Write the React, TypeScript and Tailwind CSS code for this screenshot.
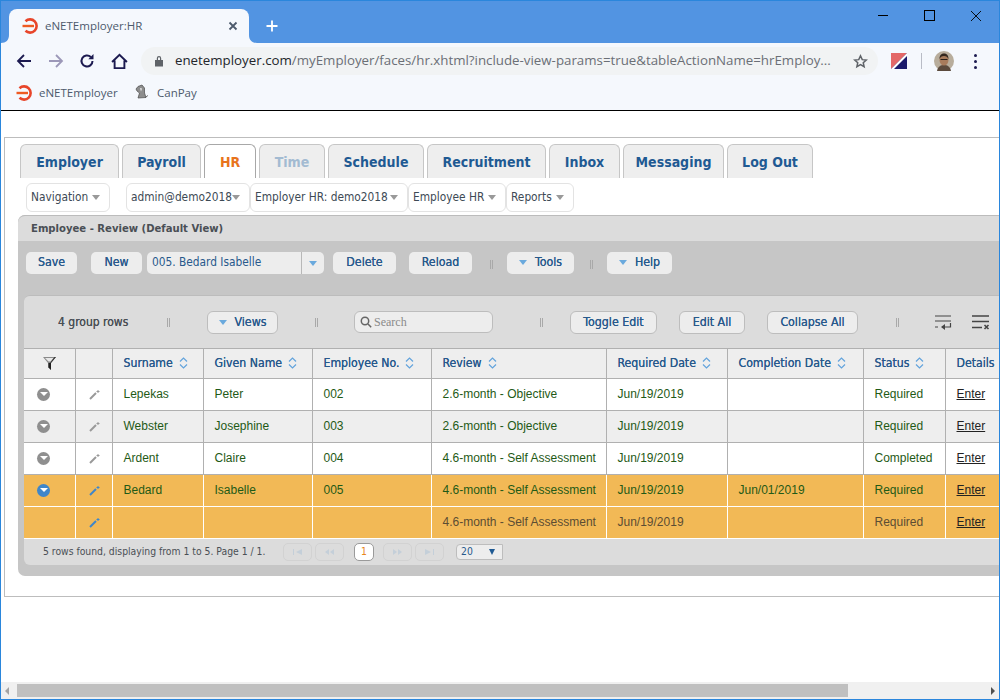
import type { ReactNode } from 'react';

const tahoma = 'font-["DejaVu_Sans_Condensed","DejaVu_Sans",sans-serif]';

const tabs = [
  { label: 'Employer', w: 'w-[99px]', text: 'text-[#1f5a93]' },
  { label: 'Payroll', w: 'w-[79px]', text: 'text-[#1f5a93]' },
  { label: 'HR', w: 'w-[52px]', text: 'text-[#e8731c]', active: true },
  { label: 'Time', w: 'w-[66px]', text: 'text-[#a3bbd2]' },
  { label: 'Schedule', w: 'w-[96px]', text: 'text-[#1f5a93]' },
  { label: 'Recruitment', w: 'w-[119px]', text: 'text-[#1f5a93]' },
  { label: 'Inbox', w: 'w-[71px]', text: 'text-[#1f5a93]' },
  { label: 'Messaging', w: 'w-[101px]', text: 'text-[#1f5a93]' },
  { label: 'Log Out', w: 'w-[86px]', text: 'text-[#1f5a93]' },
];

const columns = [
  { label: '', w: 'w-[51px]' },
  { label: '', w: 'w-[37px]' },
  { label: 'Surname', w: 'w-[91px]' },
  { label: 'Given Name', w: 'w-[109px]' },
  { label: 'Employee No.', w: 'w-[119px]' },
  { label: 'Review', w: 'w-[175px]' },
  { label: 'Required Date', w: 'w-[121px]' },
  { label: 'Completion Date', w: 'w-[136px]' },
  { label: 'Status', w: 'w-[82px]' },
  { label: 'Details', w: 'w-[70px]' },
];

const rows = [
  { surname: 'Lepekas', given: 'Peter', no: '002', review: '2.6-month - Objective', done: '', status: 'Required', bg: 'bg-white', icon: true },
  { surname: 'Webster', given: 'Josephine', no: '003', review: '2.6-month - Objective', done: '', status: 'Required', bg: 'bg-[#eeeeee]', icon: true },
  { surname: 'Ardent', given: 'Claire', no: '004', review: '4.6-month - Self Assessment', done: '', status: 'Completed', bg: 'bg-white', icon: true },
  { surname: 'Bedard', given: 'Isabelle', no: '005', review: '4.6-month - Self Assessment', done: 'Jun/01/2019', status: 'Required', bg: 'bg-[#f2b956]', icon: true, selected: true },
  { surname: '', given: '', no: '', review: '4.6-month - Self Assessment', done: '', status: 'Required', bg: 'bg-[#f2b956]', icon: false, selected: true, child: true },
];

function Logo() {
  return (
    <svg width="16" height="16" viewBox="0 0 16 16" className="shrink-0">
      <path d="M3.500 3.200A6.600 6.600 0 1 1 3.500 12.800" fill="none" stroke="#e8452a" strokeWidth="2.600" />
      <path d="M0.500 6.800H12V9.200H0.500Z" fill="#ee5a22" />
    </svg>
  );
}

function Caret({ className = 'border-t-[#999999]' }: { className?: string }) {
  return <span className={`inline-block h-0 w-0 shrink-0 border-x-[4px] border-t-[5px] border-x-transparent ${className}`} />;
}

function NavMenu({ label, w, className = '' }: { label: string; w: string; className?: string }) {
  return (
    <div className={`flex h-[29px] ${w} items-center justify-between rounded-[6px] border border-[#e3e3e3] bg-white pl-[4px] pr-[9px] pt-[1px] text-[11.8px] text-[#3d4a55] ${className}`}>
      <span className="whitespace-nowrap">{label}</span>
      <Caret />
    </div>
  );
}

function ToolButton({ label, w, menu, className = '' }: { label: string; w: string; menu?: boolean; className?: string }) {
  return (
    <button className={`flex h-[22px] ${w} items-center justify-center gap-[8px] rounded-[5px] bg-[#ededed] pb-[1px] text-[12.3px] text-[#28598c] [text-shadow:0_0_0.5px_#28598c] ${className}`}>
      {menu && <Caret className="border-t-[#6aa9dd]" />}
      {label}
    </button>
  );
}

function GridButton({ label, w, menu }: { label: string; w: string; menu?: boolean }) {
  return (
    <button className={`flex h-[23px] ${w} items-center justify-center gap-[8px] rounded-[6px] border border-[#bdbdbd] bg-[#ededed] text-[12.3px] text-[#28598c] [text-shadow:0_0_0.5px_#28598c]`}>
      {menu && <Caret className="border-t-[#6aa9dd]" />}
      {label}
    </button>
  );
}

function Separator({ className = '' }: { className?: string }) {
  return <span className={`inline-block h-[9px] w-[3px] border-x border-[#a9a9a9] ${className}`} />;
}

function SortIcon() {
  return (
    <svg width="9" height="12" viewBox="0 0 9 12" fill="none" stroke="#62a3dc" strokeWidth="1.200" className="shrink-0">
      <path d="M1 4.500 4.500 1 8 4.500M1 7.500 4.500 11 8 7.500" />
    </svg>
  );
}

function Pencil({ color }: { color: string }) {
  return (
    <svg width="11" height="11" viewBox="0 0 11 11" fill="none" stroke={color}>
      <path d="M1 10 7 4" strokeWidth="2" />
      <path d="M9 1v3M7.500 2.500h3" strokeWidth="1" />
    </svg>
  );
}

function RowToggle({ selected }: { selected?: boolean }) {
  return (
    <span className={`ml-[13px] flex h-[13px] w-[13px] items-center justify-center rounded-full ${selected ? 'bg-[#3f86c9]' : 'bg-[#8f8f8f]'}`}>
      <span className="h-0 w-0 border-x-[4px] border-t-[4px] border-x-transparent border-t-white" />
    </span>
  );
}

function PageButton({ path }: { path: string }) {
  return (
    <span className="flex h-[18px] w-[29px] items-center justify-center rounded-[5px] border border-[#d2d2d2]">
      <svg width="9" height="6" viewBox="0 0 9 6" fill="#c4cfd9">
        <path d={path} />
      </svg>
    </span>
  );
}

function HeaderCell({ label }: { label: string }) {
  return (
    <span className="flex items-center gap-[6px] whitespace-nowrap pb-[1px] text-[12.2px] text-[#28598c] [text-shadow:0_0_0.5px_#28598c]">
      {label}
      <SortIcon />
    </span>
  );
}

function BodyCell({ children, className = '' }: { children?: ReactNode; className?: string }) {
  return <td className={`border-l px-[11px] pb-[2px] whitespace-nowrap ${className}`}>{children}</td>;
}

export default function App() {
  return (
    <div className="flex h-[700px] w-[1000px] flex-col overflow-hidden border border-[#2a86dc] bg-white">
      {/* browser chrome */}
      <div className='h-[42px] shrink-0 bg-[#5294e2] font-["Open_Sans",sans-serif]'>
        <div className="flex h-full items-end pl-[8px]">
          <div className="relative flex h-[34px] w-[240px] items-center rounded-t-[8px] bg-[#f5f8fd] pl-[13px] pr-[11px]">
            <svg width="8" height="8" viewBox="0 0 8 8" fill="#f5f8fd" className="absolute bottom-0 -left-[8px]">
              <path d="M0 8C5 8 8 5 8 0V8Z" />
            </svg>
            <svg width="8" height="8" viewBox="0 0 8 8" fill="#f5f8fd" className="absolute bottom-0 -right-[8px]">
              <path d="M8 8C3 8 0 5 0 0V8Z" />
            </svg>
            <Logo />
            <span className="ml-[7px] flex-1 text-[11.5px] text-[#4d5a6c]">eNETEmployer:HR</span>
            <svg width="10" height="10" viewBox="0 0 10 10" stroke="#4d5a6c" strokeWidth="1.800">
              <path d="M1.500 1.500l7 7M8.500 1.500l-7 7" />
            </svg>
          </div>
          <svg width="14" height="14" viewBox="0 0 14 14" stroke="#ffffff" strokeWidth="1.800" className="mb-[10px] ml-[16px]">
            <path d="M7 1.500v11M1.500 7h11" />
          </svg>
          <div className="mb-[22px] ml-auto flex items-center gap-[36px] pr-[18px]">
            <span className="h-px w-[10px] bg-black" />
            <span className="h-[11px] w-[11px] border border-black" />
            <svg width="10" height="10" viewBox="0 0 10 10" stroke="#000000" strokeWidth="0.900">
              <path d="M0 0l10 10M10 0 0 10" />
            </svg>
          </div>
        </div>
      </div>
      <div className='flex h-[32px] shrink-0 items-center bg-[#f5f8fd] pt-[4px] font-["Open_Sans",sans-serif]'>
        <div className="flex w-[140px] shrink-0 items-center pl-[15px]">
          <svg width="16" height="16" viewBox="0 0 16 16" fill="none" stroke="#1c1a50" strokeWidth="1.800">
            <path d="M15 8H2M8 2 2 8l6 6" />
          </svg>
          <svg width="16" height="16" viewBox="0 0 16 16" fill="none" stroke="#9c98b8" strokeWidth="1.800" className="ml-[16px]">
            <path d="M1 8h13M8 2l6 6-6 6" />
          </svg>
          <svg width="16" height="16" viewBox="0 0 16 16" fill="none" stroke="#1c1a50" strokeWidth="2" className="ml-[15px]">
            <path d="M13.500 8A5.500 5.500 0 1 1 11.800 4" />
            <path d="M14.500 1v5.200H9.300Z" fill="#1c1a50" stroke="none" />
          </svg>
          <svg width="17" height="17" viewBox="0 0 16 16" fill="none" stroke="#1c1a50" strokeWidth="1.800" className="ml-[16px]">
            <path d="M1 8.500 8 1.800l7 6.700M3.400 7v7.200h9.200V7" />
          </svg>
        </div>
        <div className="flex h-[28px] w-[737px] shrink-0 items-center rounded-full bg-[#f1f3f4] pl-[13px] pr-[10px]">
          <svg width="10" height="12" viewBox="0 0 10 12" fill="#5f6368" className="shrink-0">
            <path d="M1 5h8v6.500H1ZM2.800 5V3.200a2.200 2.200 0 0 1 4.400 0V5H6V3.200a1 1 0 0 0-2 0V5Z" />
          </svg>
          <span className="ml-[11px] flex-1 whitespace-nowrap text-[13.3px] text-[#6b6f76]">
            <span className="text-[#23262b]">enetemployer.com</span>/myEmployer/faces/hr.xhtml?include-view-params=true&amp;tableActionName=hrEmploy...
          </span>
          <svg width="15" height="15" viewBox="0 0 24 24" fill="none" stroke="#5f6368" strokeWidth="2.400" className="shrink-0">
            <path d="m12 3 2.800 6 6.400.7-4.800 4.300 1.400 6.400L12 17.100 6.200 20.400 7.600 14 2.800 9.700 9.200 9Z" />
          </svg>
        </div>
        <svg width="16" height="16" viewBox="0 0 16 16" className="ml-[13px] shrink-0">
          <rect width="16" height="16" fill="#e36868" />
          <path d="M16 0v16H0Z" fill="#1b1a6b" />
          <path d="M16 0 0 16h3L16 3Z" fill="#ffffff" />
        </svg>
        <span className="ml-[14px] h-[16px] w-px shrink-0 bg-[#b9bcc6]" />
        <svg width="20" height="20" viewBox="0 0 20 20" className="ml-[12px] shrink-0">
          <circle cx="10" cy="10" r="10" fill="#b8ad9c" />
          <path d="M3 20c1-5 4-6 7-6s6 1 7 6Z" fill="#5b4a3d" />
          <ellipse cx="10" cy="9" rx="4.500" ry="5.500" fill="#a77b5c" />
          <path d="M5.500 8c0-4 2-5.500 4.500-5.500S14.500 4 14.500 8c-1-2-2-3-4.500-3S6.500 6 5.500 8Z" fill="#33271f" />
          <path d="M6.500 8.500h7" stroke="#2a211b" strokeWidth="1" />
        </svg>
        <div className="ml-[20px] flex flex-col gap-[3px]">
          <span className="h-[3px] w-[3px] rounded-full bg-[#1c1a50]" />
          <span className="h-[3px] w-[3px] rounded-full bg-[#1c1a50]" />
          <span className="h-[3px] w-[3px] rounded-full bg-[#1c1a50]" />
        </div>
      </div>
      <div className='flex h-[36px] shrink-0 items-center border-b border-black bg-[#f5f8fd] pl-[15px] font-["Open_Sans",sans-serif] text-[11.500px] text-[#4d5a6c]'>
        <Logo />
        <span className="ml-[7px] w-[78px]">eNETEmployer</span>
        <svg width="15" height="17" viewBox="0 0 15 17" className="ml-[17px]">
          <path d="M11 13.500 14 11.500" stroke="#777777" strokeWidth="1" />
          <path d="M4 2.500 8 1l2.500 3v5l1.500 4.500-8 .5 1.500-5L3 7 2 5Z" fill="#8d8d8d" stroke="#4a4a4a" strokeWidth="0.700" />
          <path d="M6 4l2 .5-1 3Z" fill="#efefef" />
        </svg>
        <span className="ml-[8px]">CanPay</span>
      </div>

      {/* page */}
      <div className="min-h-0 flex-1 overflow-hidden pl-[3px] pt-[26px]">
        <div className={`h-[460px] w-[1100px] border border-[#bdbdbd] pl-[15px] pt-[6px] ${tahoma}`}>
          <div className="flex gap-[3px]">
            {tabs.map((t) => (
              <div
                key={t.label}
                className={`flex h-[34px] ${t.w} items-center justify-center rounded-t-[6px] border border-b-0 pt-[1px] text-[14px] font-bold ${t.text} ${
                  t.active ? 'border-[#a8a8a8] bg-white' : 'border-[#c6c6c6] bg-[#eeeeee]'
                }`}
              >
                {t.label}
              </div>
            ))}
          </div>

          <div className="flex h-[37px] items-center pl-[6px] pt-[1px]">
            <NavMenu label="Navigation" w="w-[84px]" />
            <NavMenu label="admin@demo2018" w="w-[124px]" className="ml-[16px]" />
            <NavMenu label="Employer HR: demo2018" w="w-[158px]" />
            <NavMenu label="Employee HR" w="w-[98px]" />
            <NavMenu label="Reports" w="w-[68px]" />
          </div>

          <div className="-ml-[2px] h-[361px] rounded-b-[7px] rounded-tl-[7px] bg-[#c6c6c6]">
            <div className="flex h-[26px] items-center rounded-tl-[7px] border-t border-[#bcbcbc] bg-[#dcdcdc] pl-[13px] pt-[2px] text-[11.2px] font-bold text-[#4a4f55]">
              Employee - Review (Default View)
            </div>
            <div className="flex h-[54px] items-start pl-[8px] pt-[11px]">
              <ToolButton label="Save" w="w-[51px]" />
              <ToolButton label="New" w="w-[51px]" className="ml-[14px]" />
              <div className="ml-[5px] flex h-[22px] w-[177px] items-center rounded-[5px] bg-[#ededed] pl-[5px] text-[11.8px] text-[#28598c]">
                <span className="flex-1">005. Bedard Isabelle</span>
                <span className="flex h-full w-[23px] items-center justify-center border-l border-[#b8b8b8]">
                  <Caret className="border-t-[#6aa9dd]" />
                </span>
              </div>
              <ToolButton label="Delete" w="w-[63px]" className="ml-[9px]" />
              <ToolButton label="Reload" w="w-[63px]" className="ml-[13px]" />
              <Separator className="ml-[18px] mt-[8px]" />
              <ToolButton label="Tools" w="w-[67px]" menu className="ml-[14px]" />
              <Separator className="ml-[16px] mt-[8px]" />
              <ToolButton label="Help" w="w-[65px]" menu className="ml-[14px]" />
            </div>

            <div className="ml-[6px] h-[270px] overflow-hidden rounded-l-[6px] border-t border-[#bcbcbc] bg-[#dcdcdc]">
              <div className="flex h-[52px] items-center text-[12px] text-[#4a4f55]">
                <span className="ml-[34px] w-[72px] whitespace-nowrap [text-shadow:0_0_0.5px_#4a4f55]">4 group rows</span>
                <Separator className="ml-[37px]" />
                <div className="ml-[37px]"><GridButton label="Views" w="w-[71px]" menu /></div>
                <Separator className="ml-[37px]" />
                <div className="ml-[36px] flex h-[22px] w-[139px] items-center gap-[2px] rounded-[6px] border border-[#bdbdbd] bg-[#ededed] pl-[5px] font-['Liberation_Serif',serif] text-[12px] text-[#8a8a8a]">
                  <svg width="12" height="12" viewBox="0 0 12 12" fill="none" stroke="#666666" strokeWidth="1.500">
                    <circle cx="5" cy="5" r="3.700" />
                    <path d="m8 8 3.200 3.200" />
                  </svg>
                  Search
                </div>
                <Separator className="ml-[47px]" />
                <div className="ml-[27px]"><GridButton label="Toggle Edit" w="w-[87px]" /></div>
                <div className="ml-[22px]"><GridButton label="Edit All" w="w-[66px]" /></div>
                <div className="ml-[22px]"><GridButton label="Collapse All" w="w-[91px]" /></div>
                <Separator className="ml-[38px]" />
                <svg width="17" height="15" viewBox="0 0 17 15" fill="none" stroke="#444444" strokeWidth="1.200" className="ml-[36px]">
                  <path d="M0 1h16M0 6h16M0 12h3M15.500 8v4H7" />
                  <path d="M10 9v6l-4-3Z" fill="#444444" stroke="none" />
                </svg>
                <svg width="18" height="15" viewBox="0 0 18 15" fill="none" stroke="#444444" strokeWidth="1.600" className="ml-[20px]">
                  <path d="M0 1h17M0 6.500h17M0 12.500h10M12.500 10l4 4M16.500 10l-4 4" />
                </svg>
              </div>

              <table className="w-[1100px] table-fixed border-collapse font-['Liberation_Sans',sans-serif] text-[12px]">
                <colgroup>
                  {columns.map((c, i) => (
                    <col key={i} className={c.w} />
                  ))}
                  <col />
                </colgroup>
                <thead>
                  <tr className={`h-[30px] border-y border-[#b0b0b0] bg-[#eeeeee] ${tahoma}`}>
                    <th className="px-0">
                      <svg width="15" height="15" viewBox="0 0 15 15" className="mx-auto">
                        <path d="M1 1h13L9 7v7l-3-3V7Z" fill="#8a8a8a" />
                        <path d="M3 2h8.500L8.500 5.500h-2Z" fill="#e8e8e8" />
                        <path d="M6.500 7H9v7l-2.500-2.500Z" fill="#1f1f1f" />
                        <path d="M14 1 9 7h-1l4.500-6Z" fill="#333333" />
                      </svg>
                    </th>
                    <th className="border-l border-[#b0b0b0]" />
                    {columns.slice(2, 10).map((c) => (
                      <th key={c.label} className="border-l border-[#b0b0b0] pl-[11px] text-left font-normal">
                        {c.label !== 'Details' ? (
                          <HeaderCell label={c.label} />
                        ) : (
                          <span className="text-[12.2px] text-[#28598c] [text-shadow:0_0_0.5px_#28598c]">{c.label}</span>
                        )}
                      </th>
                    ))}
                    <th className="border-l border-[#b0b0b0]" />
                  </tr>
                </thead>
                <tbody>
                  {rows.map((r, i) => {
                    const line = r.selected ? 'border-white' : 'border-[#b0b0b0]';
                    const text = r.child ? 'text-[#5c4d33]' : 'text-[#1f5a16]';
                    return (
                      <tr key={i} className={`h-[32px] border-b ${r.bg} ${text} ${line}`}>
                        <td className="pb-[1px]">{r.icon && <RowToggle selected={r.selected} />}</td>
                        <td className={`border-l pb-[1px] ${line}`}>
                          <span className="flex justify-center pl-[1px]">
                            <Pencil color={r.selected ? '#3f86c9' : '#999999'} />
                          </span>
                        </td>
                        <BodyCell className={line}>{r.surname}</BodyCell>
                        <BodyCell className={line}>{r.given}</BodyCell>
                        <BodyCell className={line}>{r.no}</BodyCell>
                        <BodyCell className={line}>{r.review}</BodyCell>
                        <BodyCell className={line}>Jun/19/2019</BodyCell>
                        <BodyCell className={line}>{r.done}</BodyCell>
                        <BodyCell className={line}>{r.status}</BodyCell>
                        <BodyCell className={line}>
                          <span className="text-[#222222] underline">Enter</span>
                        </BodyCell>
                        <td className={`border-l ${line}`} />
                      </tr>
                    );
                  })}
                </tbody>
              </table>

              <div className="flex h-[26px] items-center pl-[19px] text-[10.3px] text-[#4a4f55]">
                <span className="w-[240px] whitespace-nowrap">5 rows found, displaying from 1 to 5. Page 1 / 1.</span>
                <PageButton path="M0 0h1v6H0ZM9 0v6L3 3Z" />
                <span className="ml-[3px]"><PageButton path="M4 0v6L0 3ZM9 0v6L5 3Z" /></span>
                <span className="ml-[10px] flex h-[18px] w-[20px] items-center justify-center rounded-[5px] border border-[#9a9a9a] bg-white text-[#e8861c]">1</span>
                <span className="ml-[9px]"><PageButton path="M0 0v6l4-3ZM5 0v6l4-3Z" /></span>
                <span className="ml-[3px]"><PageButton path="M0 0v6l6-3ZM8 0h1v6H8Z" /></span>
                <div className="ml-[12px] flex h-[16px] w-[47px] items-center justify-between rounded-l-[4px] border border-[#bdbdbd] bg-[#ededed] pl-[4px] pr-[7px] text-[#28598c]">
                  20
                  <span className="h-0 w-0 border-x-[3.500px] border-t-[6px] border-x-transparent border-t-[#1f5a93]" />
                </div>
              </div>
            </div>
          </div>
        </div>
      </div>

      {/* page scrollbar */}
      <div className="flex h-[17px] shrink-0 items-center bg-[#f0f0f0]">
        <span className="ml-[4px] h-0 w-0 border-y-[4px] border-r-[4px] border-y-transparent border-r-[#a3a3a3]" />
        <span className="ml-[8px] h-[13px] w-[831px] bg-[#c0c0c0]" />
        <span className="ml-auto mr-[4px] h-0 w-0 border-y-[4px] border-l-[4px] border-y-transparent border-l-[#505050]" />
      </div>
    </div>
  );
}
